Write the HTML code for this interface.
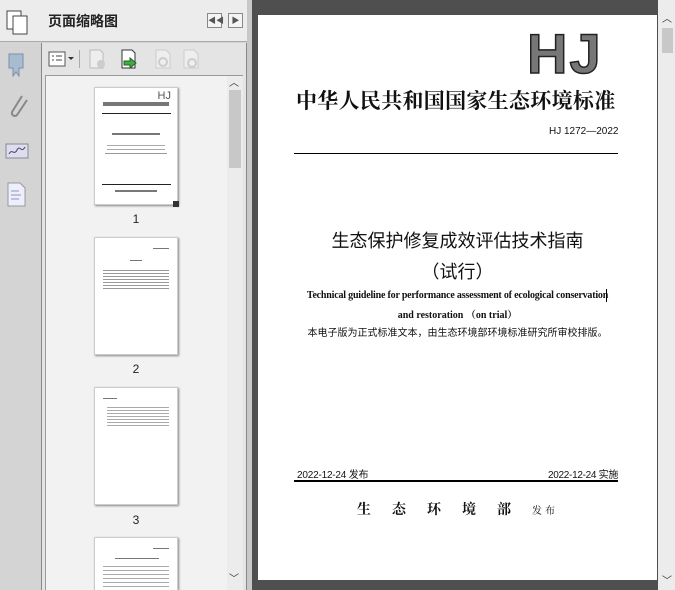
<!DOCTYPE html>
<html style="height:590px;overflow:hidden"><head><meta charset="utf-8"><style>
*{margin:0;padding:0;box-sizing:border-box}
body{width:675px;height:590px;overflow:hidden;background:#4f4f4f;position:relative;font-family:"Liberation Sans","Noto Sans CJK SC",sans-serif}
.a{position:absolute}
.thumb{position:absolute;left:94px;width:84px;height:118px;background:#fff;box-shadow:1px 1px 2px #888;border:1px solid #ccc}
.lbl{position:absolute;left:126px;width:20px;text-align:center;font-size:12px;color:#222}
.ln{position:absolute;height:1px;background:#777}
.serif{font-family:"Liberation Serif","Noto Serif CJK SC",serif}
.ar{position:absolute;font-size:10px;line-height:12px;color:#333}
</style></head><body>
<div class="a" style="left:0;top:0;width:247px;height:590px;background:#d4d4d4"></div>
<div class="a" style="left:0;top:0;width:247px;height:42px;background:#ececec;border-bottom:1px solid #aaa"></div>
<svg class="a" style="left:6px;top:10px" width="24" height="26"><rect x="1" y="1" width="14" height="18" fill="#fff" stroke="#444"/><rect x="7" y="6" width="14" height="18" fill="#fff" stroke="#444"/></svg>
<div class="a" style="left:48px;top:11px;font-size:14px;font-weight:bold;color:#222">页面缩略图</div>
<div class="a" style="left:207px;top:13px;width:15px;height:15px;border:1px solid #888;background:#f4f4f4;font-size:8px;color:#555;text-align:center;line-height:13px">◀◀</div>
<div class="a" style="left:228px;top:13px;width:15px;height:15px;border:1px solid #888;background:#f4f4f4;font-size:8px;color:#555;text-align:center;line-height:13px">▶</div>
<svg class="a" style="left:6px;top:52px" width="20" height="26"><path d="M3 2h14v14h-4v8l-3-4-3 4V16H3z" fill="#a8bcd0" stroke="#7890a8"/></svg>
<svg class="a" style="left:6px;top:92px" width="24" height="30"><path d="M16 4 L6 20 a3 3 0 0 0 5 3 L21 8" fill="none" stroke="#888" stroke-width="2"/></svg>
<svg class="a" style="left:5px;top:140px" width="26" height="24"><rect x="1" y="4" width="22" height="14" fill="#dde" stroke="#889"/><path d="M4 14c3-6 5 2 8-4s4 4 8-3" stroke="#446" fill="none"/></svg>
<svg class="a" style="left:7px;top:182px" width="20" height="26"><path d="M1 1h12l5 5v18H1z" fill="#eef" stroke="#999"/><path d="M4 9h8M4 13h10M4 17h8" stroke="#89a"/></svg>
<div class="a" style="left:41px;top:43px;width:206px;height:547px;background:#e4e4e4;border-left:1px solid #888;border-right:1px solid #888"></div>
<svg class="a" style="left:47px;top:49px" width="28" height="20"><rect x="2" y="3" width="16" height="14" fill="#fff" stroke="#555"/><path d="M5 7h2M5 11h2M9 7h6M9 11h6" stroke="#444"/><path d="M21 8l3 3 3-3z" fill="#333"/></svg>
<div class="a" style="left:79px;top:50px;width:1px;height:18px;background:#aaa"></div>
<svg class="a" style="left:86px;top:48px" width="120" height="22"><path d="M4 2h10l3 3v15H4z" fill="#eee" stroke="#bbb"/><circle cx="15" cy="16" r="4" fill="#ccc"/><path d="M36 2h10l3 3v15H36z" fill="#fff" stroke="#333"/><path d="M38 13h6v-3l6 5-6 5v-3h-6z" fill="#4a4" stroke="#262"/><path d="M70 2h10l4 4v14H70z" fill="#eee" stroke="#ccc"/><circle cx="77" cy="14" r="4" fill="none" stroke="#ccc" stroke-width="2"/><path d="M98 2h10l4 4v14H98z" fill="#eee" stroke="#ccc"/><circle cx="106" cy="15" r="4" fill="none" stroke="#ccc" stroke-width="2"/></svg>
<div class="a" style="left:45px;top:75px;width:198px;height:515px;background:#f2f2f2;border-top:1px solid #999;border-left:1px solid #999;overflow:hidden">
<div class="thumb" style="top:11px;left:48px">
<div class="a" style="right:6px;top:2px;font-size:11px;color:#555">HJ</div>
<div class="a" style="left:8px;top:14px;width:66px;height:4px;background:#777"></div>
<div class="ln" style="left:7px;top:25px;width:69px;background:#222"></div>
<div class="ln" style="left:17px;top:45px;width:48px;height:2px"></div>
<div class="ln" style="left:12px;top:57px;width:58px;background:#aaa"></div>
<div class="ln" style="left:12px;top:61px;width:58px;background:#aaa"></div>
<div class="ln" style="left:10px;top:65px;width:62px;background:#999"></div>
<div class="ln" style="left:7px;top:96px;width:69px;background:#222"></div>
<div class="ln" style="left:20px;top:102px;width:42px;height:2px"></div>
</div>
<div class="a" style="left:127px;top:125px;width:6px;height:6px;background:#333"></div>
<div class="lbl" style="top:136px;left:80px">1</div>
<div class="thumb" style="top:161px;left:48px"><div class="ln" style="left:58px;top:10px;width:16px"></div><div class="ln" style="left:35px;top:22px;width:12px"></div><div class="a" style="left:8px;top:32px;width:66px;height:20px;background:repeating-linear-gradient(#999 0 1px,transparent 1px 3px)"></div></div>
<div class="lbl" style="top:286px;left:80px">2</div>
<div class="thumb" style="top:311px;left:48px"><div class="ln" style="left:8px;top:10px;width:14px"></div><div class="a" style="left:12px;top:19px;width:62px;height:20px;background:repeating-linear-gradient(#aaa 0 1px,transparent 1px 3px)"></div></div>
<div class="lbl" style="top:437px;left:80px">3</div>
<div class="thumb" style="top:461px;left:48px;height:54px"><div class="ln" style="left:58px;top:10px;width:16px"></div><div class="ln" style="left:20px;top:20px;width:44px"></div><div class="a" style="left:8px;top:28px;width:66px;height:24px;background:repeating-linear-gradient(#aaa 0 1px,transparent 1px 4px)"></div></div>
</div>
<div class="a" style="left:227px;top:76px;width:16px;height:514px;background:#ececec"></div>
<div class="a" style="left:229px;top:90px;width:12px;height:78px;background:#c8c8c8"></div>
<div class="ar" style="left:229px;top:78px">︿</div>
<div class="ar" style="left:229px;top:574px">﹀</div>
<div class="a" style="left:247px;top:0;width:5px;height:590px;background:#c8c8c8"></div>
<div class="a" style="left:252px;top:0;width:6px;height:590px;background:#4f4f4f"></div>
<div class="a" style="left:658px;top:0;width:17px;height:590px;background:#ececec"></div>
<div class="a" style="left:662px;top:28px;width:11px;height:25px;background:#c8c8c8"></div>
<div class="ar" style="left:662px;top:14px">︿</div>
<div class="ar" style="left:662px;top:576px">﹀</div>
<div class="a" style="left:258px;top:15px;width:399px;height:565px;background:#fff"></div>
<div class="a" style="left:527px;top:26px;font-size:56px;font-weight:bold;color:#777;letter-spacing:2px;line-height:56px;-webkit-text-stroke:1.5px #222">HJ</div>
<div class="a serif" style="left:296px;top:85px;font-size:21px;font-weight:bold;color:#111;white-space:nowrap;letter-spacing:0.3px">中华人民共和国国家生态环境标准</div>
<div class="a" style="left:549px;top:126px;font-size:10px;color:#111">HJ 1272—2022</div>
<div class="a" style="left:294px;top:153px;width:324px;height:1px;background:#000"></div>
<div class="a" style="left:258px;top:227px;width:399px;text-align:center;font-size:18px;color:#111">生态保护修复成效评估技术指南</div>
<div class="a" style="left:258px;top:258px;width:399px;text-align:center;font-size:18px;color:#111">（试行）</div>
<div class="a serif" style="left:300px;top:290px;width:315px;text-align:center;font-size:10px;font-weight:bold;color:#111;white-space:nowrap;letter-spacing:-0.2px">Technical guideline for performance assessment of ecological conservation</div>
<div class="a" style="left:606px;top:289px;width:1px;height:13px;background:#000"></div>
<div class="a serif" style="left:258px;top:306px;width:399px;text-align:center;font-size:10px;font-weight:bold;color:#111">and restoration （on trial）</div>
<div class="a" style="left:258px;top:324px;width:399px;text-align:center;font-size:10px;color:#111">本电子版为正式标准文本，由生态环境部环境标准研究所审校排版。</div>
<div class="a" style="left:297px;top:466px;font-size:10px;color:#111;letter-spacing:-0.2px">2022-12-24 发布</div>
<div class="a" style="left:548px;top:466px;font-size:10px;color:#111;letter-spacing:-0.3px">2022-12-24 实施</div>
<div class="a" style="left:294px;top:480px;width:324px;height:2px;background:#000"></div>
<div class="a serif" style="left:357px;top:499px;font-size:14px;font-weight:bold;color:#111;white-space:nowrap"><span style="letter-spacing:21px">生态环境部</span><span style="font-size:10px;letter-spacing:3px;font-weight:normal">发布</span></div>
</body></html>
